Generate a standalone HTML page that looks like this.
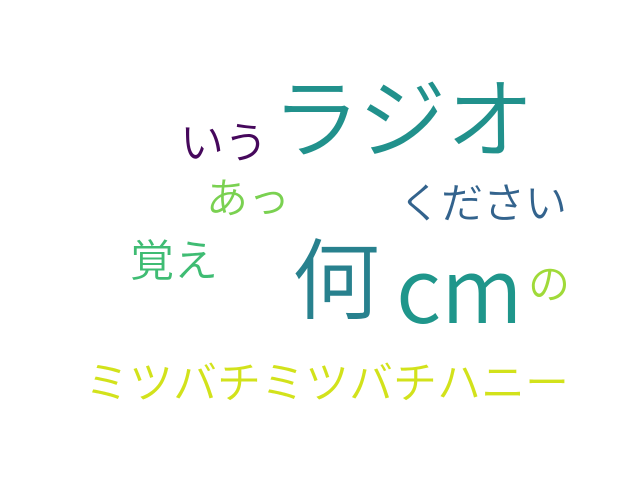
<!DOCTYPE html>
<html><head><meta charset="utf-8"><style>
html,body{margin:0;padding:0;background:#fff;width:640px;height:480px;overflow:hidden}
span{position:absolute;line-height:1;white-space:nowrap;font-family:"Noto Sans CJK JP","Liberation Sans",sans-serif;font-weight:350}
</style></head><body>
<span style="left:272px;top:70px;font-size:88px;color:#21918c">ラジオ</span>
<span style="left:180px;top:117px;font-size:44px;color:#46085c">いう</span>
<span style="left:206px;top:175px;font-size:42px;color:#7ad151">あっ</span>
<span style="left:399px;top:180px;font-size:42px;color:#33638d">ください</span>
<span style="left:130px;top:235px;font-size:44px;color:#3fbc73">覚え</span>
<span style="left:292px;top:231px;font-size:88px;color:#28818e">何</span>
<span style="left:396px;top:240px;font-size:89px;color:#1f968b">cm</span>
<span style="left:528px;top:261px;font-size:42px;color:#a0da39">の</span>
<span style="left:85px;top:357px;font-size:44px;color:#d2e21b">ミツバチミツバチハニー</span>
</body></html>
